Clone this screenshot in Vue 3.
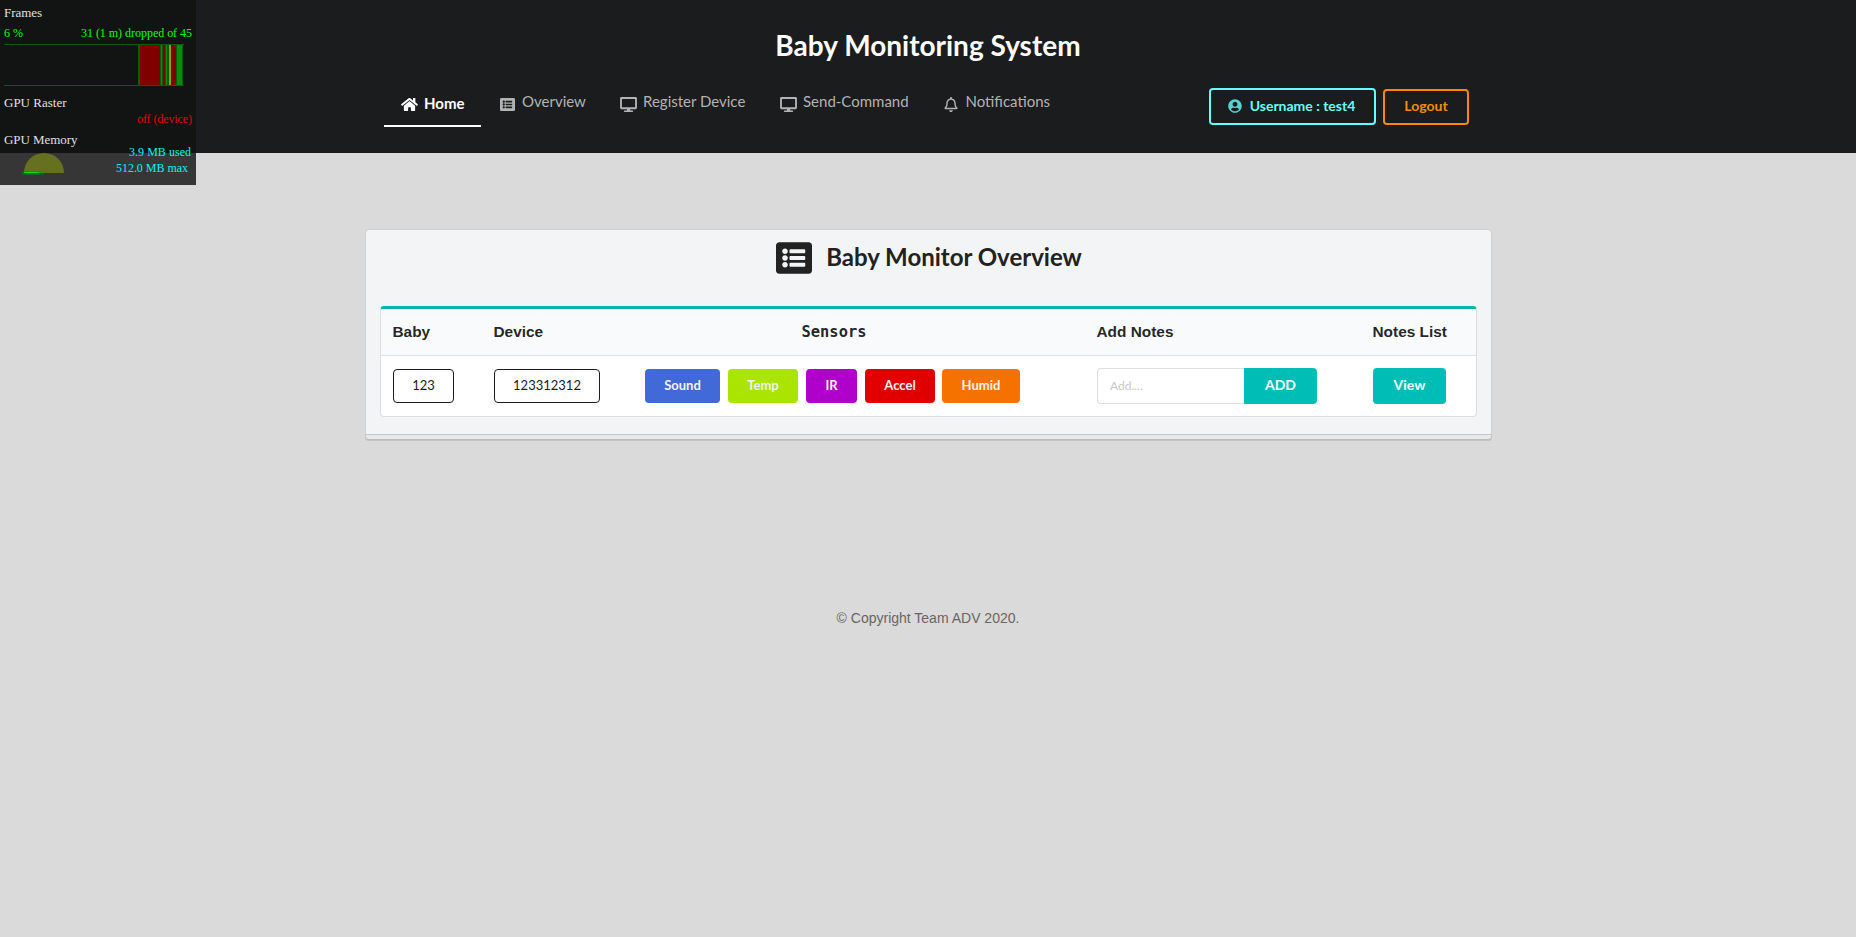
<script setup>
const icons = {
  home: { w: 576, d: 'M280.37 148.26L96 300.11V464a16 16 0 0 0 16 16l112.06-.29a16 16 0 0 0 15.92-16V368a16 16 0 0 1 16-16h64a16 16 0 0 1 16 16v95.64a16 16 0 0 0 16 16.05L464 480a16 16 0 0 0 16-16V300L295.67 148.26a12.19 12.19 0 0 0-15.3 0zM571.6 251.47L488 182.56V44.05a12 12 0 0 0-12-12h-56a12 12 0 0 0-12 12v72.61L318.47 43a48 48 0 0 0-61 0L4.34 251.47a12 12 0 0 0-1.6 16.9l25.5 31A12 12 0 0 0 45.15 301l235.22-193.74a12.19 12.19 0 0 1 15.3 0L530.9 301a12 12 0 0 0 16.9-1.6l25.5-31a12 12 0 0 0-1.7-16.93z' },
  list: { w: 512, d: 'M464 480H48c-26.51 0-48-21.49-48-48V80c0-26.51 21.49-48 48-48h416c26.51 0 48 21.49 48 48v352c0 26.51-21.49 48-48 48zM128 120c-22.091 0-40 17.909-40 40s17.909 40 40 40 40-17.909 40-40-17.909-40-40-40zm0 96c-22.091 0-40 17.909-40 40s17.909 40 40 40 40-17.909 40-40-17.909-40-40-40zm0 96c-22.091 0-40 17.909-40 40s17.909 40 40 40 40-17.909 40-40-17.909-40-40-40zm288-136v-32c0-6.627-5.373-12-12-12H204c-6.627 0-12 5.373-12 12v32c0 6.627 5.373 12 12 12h200c6.627 0 12-5.373 12-12zm0 96v-32c0-6.627-5.373-12-12-12H204c-6.627 0-12 5.373-12 12v32c0 6.627 5.373 12 12 12h200c6.627 0 12-5.373 12-12zm0 96v-32c0-6.627-5.373-12-12-12H204c-6.627 0-12 5.373-12 12v32c0 6.627 5.373 12 12 12h200c6.627 0 12-5.373 12-12z' },
  desktop: { w: 576, d: 'M528 0H48C21.5 0 0 21.5 0 48v320c0 26.5 21.5 48 48 48h192l-16 48h-72c-13.3 0-24 10.7-24 24s10.7 24 24 24h272c13.3 0 24-10.7 24-24s-10.7-24-24-24h-72l-16-48h192c26.5 0 48-21.5 48-48V48c0-26.5-21.5-48-48-48zm-16 352H64V64h448v288z' },
  bell: { w: 448, d: 'M439.39 362.29c-19.32-20.76-55.47-51.99-55.47-154.29 0-77.7-54.48-139.9-127.94-155.16V32c0-17.67-14.32-32-31.98-32s-31.98 14.33-31.98 32v20.84C118.56 68.1 64.08 130.3 64.08 208c0 102.3-36.15 133.53-55.47 154.29-6 6.45-8.66 14.16-8.61 21.71.11 16.4 12.98 32 32.1 32h383.8c19.12 0 32-15.6 32.1-32 .05-7.55-2.61-15.27-8.61-21.71zM67.53 368c21.22-27.97 44.42-74.33 44.53-159.42 0-.2-.06-.38-.06-.58 0-61.86 50.14-112 112-112s112 50.14 112 112c0 .2-.06.38-.06.58.11 85.1 23.31 131.46 44.53 159.42H67.53zM224 512c35.32 0 63.97-28.65 63.97-64H160.03c0 35.35 28.65 64 63.97 64z' },
  user: { w: 496, d: 'M248 8C111 8 0 119 0 256s111 248 248 248 248-111 248-248S385 8 248 8zm0 96c48.6 0 88 39.4 88 88s-39.4 88-88 88-88-39.4-88-88 39.4-88 88-88zm0 344c-58.7 0-111.3-26.6-146.5-68.2 18.8-35.4 55.6-59.8 98.5-59.8 2.4 0 4.8.4 7.1 1.1 13 4.2 26.6 6.9 40.9 6.9 14.3 0 28-2.7 40.9-6.9 2.3-.7 4.7-1.1 7.1-1.1 42.9 0 79.7 24.4 98.5 59.8C359.3 421.4 306.7 448 248 448z' },
}
const nav = [
  { label: 'Home', icon: 'home', cls: 'home' },
  { label: 'Overview', icon: 'list', cls: 'overview' },
  { label: 'Register Device', icon: 'desktop', cls: 'register' },
  { label: 'Send-Command', icon: 'desktop', cls: 'send' },
  { label: 'Notifications', icon: 'bell', cls: 'notif' },
]
const sensors = ['Sound', 'Temp', 'IR', 'Accel', 'Humid']
</script>

<template>
  <div class="page">
    <header class="top">
      <h1>Baby Monitoring System</h1>
      <div class="bar">
        <nav class="menu">
          <a v-for="n in nav" :key="n.label" class="item" :class="n.cls">
            <svg class="icon" :viewBox="`0 0 ${icons[n.icon].w} 512`"><path :d="icons[n.icon].d" /></svg>
            <span>{{ n.label }}</span>
          </a>
        </nav>
        <button class="outline user">
          <svg class="icon" viewBox="0 0 496 512"><path :d="icons.user.d" /></svg>
          <span>Username : test4</span>
        </button>
        <button class="outline logout">Logout</button>
      </div>
    </header>

    <main class="segment">
      <h2>
        <svg viewBox="0 0 512 512"><path :d="icons.list.d" /></svg>
        <span>Baby Monitor Overview</span>
      </h2>
      <section class="table">
        <div class="row head">
          <div>Baby</div>
          <div>Device</div>
          <div class="mono">Sensors</div>
          <div>Add Notes</div>
          <div>Notes List</div>
        </div>
        <div class="row body">
          <div><button class="plain baby">123</button></div>
          <div><button class="plain device">123312312</button></div>
          <div class="sensors">
            <button v-for="s in sensors" :key="s" class="sensor" :class="s.toLowerCase()">{{ s }}</button>
          </div>
          <div class="add">
            <input type="text" placeholder="Add...." />
            <button class="teal">ADD</button>
          </div>
          <div><button class="teal view">View</button></div>
        </div>
      </section>
    </main>

    <footer>© Copyright Team ADV 2020.</footer>

    <svg class="hud" width="196" height="185" viewBox="0 0 196 185">
      <rect width="196" height="185" fill="#111" fill-opacity=".82" />
      <g font-size="13" fill="#e0e0e0">
        <text x="4" y="17" textLength="38">Frames</text>
        <text x="4" y="107" textLength="62.5">GPU Raster</text>
        <text x="4" y="144" textLength="73.5">GPU Memory</text>
      </g>
      <g font-size="12" fill="#00ff00">
        <text x="4" y="37" textLength="19">6 %</text>
        <text x="81" y="37" textLength="111">31 (1 m) dropped of 45</text>
      </g>
      <text x="137" y="123" textLength="55" font-size="12" fill="#e60000">off (device)</text>
      <g font-size="12" fill="#00f4f4">
        <text x="129" y="156" textLength="62">3.9 MB used</text>
        <text x="116" y="172" textLength="72">512.0 MB max</text>
      </g>
      <g shape-rendering="crispEdges">
        <path fill="#0b590b" d="M4 44h180v1H4zM4 85h180v1H4zM138 45h45v40h-45z" />
        <path fill="#800000" d="M140 45h20v40h-20zM163 45h2v40h-2zM171 45h5v40h-5z" />
        <path fill="#088c0d" d="M161 45h1v40h-1zM166 45h1v40h-1zM177 45h5v40h-5z" />
        <path fill="#9a9a08" d="M169 45h2v40h-2z" />
      </g>
      <path fill="#66711f" d="M24 173a20 20 0 0 1 40 0z" />
      <path fill="#008c20" fill-opacity=".4" d="M22 171h22v4H22z" />
      <path fill="#00e010" d="M24 172h14v1H24z" />
      <path fill="#18a018" d="M38 172h6v1h-6z" />
    </svg>
  </div>
</template>

<style>
html,
body {
  background: #dadada;
}
</style>

<style scoped>
* {
  box-sizing: border-box;
}
.page {
  position: relative;
  height: 937px;
  overflow: hidden;
  background: #dadada;
  font-family: Lato, 'Liberation Sans', sans-serif;
  font-size: 14px;
}
h1,
h2 {
  margin: 0;
}
button {
  display: flex;
  align-items: center;
  justify-content: center;
  padding: 0 0 2px;
  border: 0;
  border-radius: 4px;
  font-family: inherit;
  font-weight: 700;
  white-space: nowrap;
}
svg {
  fill: currentColor;
}
.top {
  height: 153px;
  background: #1b1c1d;
}
.top h1 {
  height: 88px;
  padding-top: 27px;
  color: #fff;
  font-size: 28px;
  line-height: 36px;
  text-align: center;
}
.bar {
  display: flex;
  align-items: flex-start;
  width: 1085px;
  margin-left: 384px;
}
.menu {
  display: flex;
  width: 825px;
}
.item {
  display: flex;
  flex: none;
  align-items: center;
  height: 28px;
  color: #b3b3b3;
  font-size: 15px;
  line-height: 20px;
  white-space: nowrap;
}
.item .icon {
  flex: none;
  height: 15px;
  margin-top: 5px;
}
.item span {
  margin-top: -3px;
}
.home {
  width: 97px;
  height: 39px;
  padding: 0 0 7px 17px;
  border-bottom: 2px solid #fff;
  color: #fff;
  font-weight: 700;
}
.item.home .icon {
  width: 17px;
  margin: 3px 6px 0 0;
}
.item.home span {
  margin-top: 0;
}
.overview {
  width: 120px;
  padding-left: 19px;
}
.overview .icon {
  width: 15px;
  margin-right: 7px;
}
.register {
  width: 160px;
  padding-left: 19px;
}
.register .icon,
.send .icon {
  width: 17px;
  margin-right: 6px;
}
.send {
  width: 165px;
  padding-left: 19px;
}
.notif {
  padding-left: 18px;
}
.notif .icon {
  width: 14px;
  margin-right: 7.5px;
}
.outline {
  border: 2px solid;
  background: transparent;
  font-size: 14px;
}
.user {
  width: 167px;
  height: 37px;
  padding-right: 2px;
  color: #66ffff;
}
.user .icon {
  width: 14px;
  height: 14px;
  margin-right: 8px;
  opacity: 0.8;
}
.logout {
  width: 86px;
  height: 36px;
  margin: 1px 0 0 7px;
  padding-bottom: 3px;
  color: #ff8800;
}
.segment {
  position: relative;
  width: 1127px;
  height: 206px;
  margin: 76px 0 0 365px;
  padding: 0 14px;
  border: 1px solid #cfd0d1;
  border-radius: 4px 4px 0 0;
  background: #f3f4f5;
}
.segment::after {
  content: '';
  position: absolute;
  left: -1px;
  right: -1px;
  top: 204px;
  height: 4px;
  border: 1px solid #c5c6c8;
  border-bottom-color: #b9babb;
  border-radius: 0 0 4px 4px;
  background: #e8e9ea;
  box-shadow: 0 1px 0 rgba(34, 36, 38, 0.12);
}
h2 {
  display: flex;
  align-items: center;
  justify-content: center;
  height: 76px;
  padding-bottom: 21px;
  color: #212221;
  font-size: 24px;
  line-height: 30px;
}
h2 svg {
  width: 36px;
  height: 36px;
  margin: 0 14px 0 1px;
}
h2 span {
  margin-top: -2px;
}
.table {
  height: 111px;
  border: 1px solid #dcdddd;
  border-top: 3px solid #00b5ad;
  border-radius: 4px;
  background: #fff;
  overflow: hidden;
}
.row {
  display: grid;
  grid-template-columns: 101px 151px 452px 276px 1fr;
  align-items: center;
  padding-left: 12px;
}
.head {
  height: 47px;
  padding-left: 11.5px;
  border-bottom: 1px solid #e0e1e2;
  background: #f9fafb;
  color: rgba(0, 0, 0, 0.87);
  font: 700 15.4px 'Liberation Sans', sans-serif;
}
.mono {
  width: 379px;
  font-family: 'DejaVu Sans Mono', monospace;
  text-align: center;
}
.body {
  height: 60px;
}
.plain {
  height: 34px;
  border: 1px solid #1b1c1d;
  background: #fff;
  color: #1b1c1d;
  font-size: 13px;
  font-weight: 400;
}
.baby {
  width: 61px;
}
.device {
  width: 106px;
}
.sensors {
  display: flex;
  gap: 8px;
}
.sensor {
  height: 34px;
  color: #f2f2f2;
  font-size: 13px;
}
.sound {
  width: 75px;
  background: #4169d8;
}
.temp {
  width: 70px;
  background: #a9e500;
}
.ir {
  width: 51px;
  background: #b000cb;
}
.accel {
  width: 70px;
  background: #e00000;
}
.humid {
  width: 78px;
  margin-left: -1px;
  background: #f57200;
}
.add {
  display: flex;
}
.add input {
  width: 147px;
  height: 36px;
  padding: 0 12px 1px;
  border: 1px solid #dededf;
  border-right: 0;
  border-radius: 4px 0 0 4px;
  background: #fff;
  font-family: inherit;
  font-size: 12px;
}
.add input::placeholder {
  color: #c8c8c8;
}
.teal {
  width: 73px;
  height: 36px;
  padding-bottom: 3px;
  background: #00bdb5;
  color: #f5fcfb;
  font-size: 14px;
}
.add .teal {
  border-radius: 0 4px 4px 0;
}
footer {
  margin-top: 174px;
  color: #666;
  font: 14px/18px 'Liberation Sans', sans-serif;
  text-align: center;
}
.hud {
  position: absolute;
  top: 0;
  left: 0;
  font-family: 'Liberation Serif', serif;
}
</style>
